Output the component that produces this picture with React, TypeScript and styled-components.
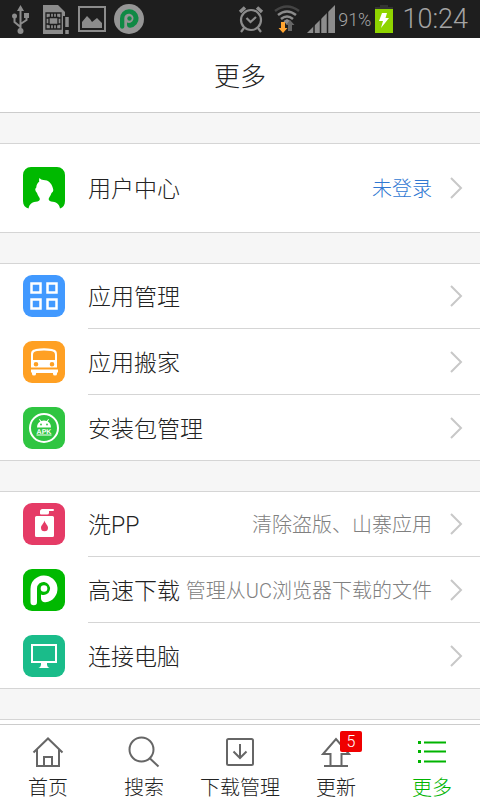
import React from "react";
import styled, { createGlobalStyle } from "styled-components";

const GlobalStyle = createGlobalStyle`
  * { box-sizing: border-box; }
  body {
    margin: 0;
    background: #f6f6f6;
    color: #222;
    font-family: Roboto, "Noto Sans CJK SC", sans-serif;
    font-weight: 300;
  }
  button { font: inherit; color: inherit; }
  svg { display: block; flex: none; }
`;

const Page = styled.div`
  display: flex;
  flex-direction: column;
  height: 100vh;
`;

const StatusBar = styled.div`
  display: flex;
  flex: none;
  align-items: center;
  justify-content: space-between;
  height: 38px;
  padding: 0 12px 0 10px;
  background: #1e1e1e;
  color: #a4a4a4;
`;

const StatusSide = styled.div<{ $gap: number }>`
  display: flex;
  align-items: center;
  gap: ${(p) => p.$gap}px;
`;

const Battery = styled.span`
  font-size: 18px;
  line-height: 24px;
  padding-top: 2px;
  margin: 0 -2px 0 -3px;
`;

const Clock = styled.time`
  font-size: 27px;
  line-height: 38px;
  margin-left: 3px;
`;

const Header = styled.header`
  display: flex;
  flex: none;
  align-items: center;
  justify-content: center;
  height: 75px;
  padding-top: 4px;
  background: #fff;
  border-bottom: 1px solid #ccc;
`;

const Title = styled.h1`
  margin: 0;
  font-size: 26px;
  line-height: 40px;
  font-weight: 300;
`;

const Content = styled.main`
  flex: 1;
  min-height: 0;
  overflow: hidden;
  padding-top: 30px;
`;

const Group = styled.ul`
  list-style: none;
  margin: 0 0 30px;
  padding: 0;
  min-height: 66px;
  background: #fff;
  border-top: 1px solid #d5d5d5;
  border-bottom: 1px solid #d5d5d5;
`;

const Row = styled.button<{ $tall?: boolean }>`
  display: flex;
  align-items: stretch;
  width: 100%;
  min-height: ${(p) => (p.$tall ? 88 : 64)}px;
  padding: 0;
  border: 0;
  background: transparent;
  text-align: left;
  cursor: pointer;
`;

const IconCell = styled.span`
  display: flex;
  flex: none;
  align-items: center;
  justify-content: center;
  width: 88px;
`;

const RowBody = styled.span`
  display: flex;
  flex: 1;
  align-items: center;
  min-width: 0;
  padding-right: 17px;
`;

const Item = styled.li`
  & + & ${Row} { min-height: 66px; }
  & + & ${IconCell} { padding-top: 2px; }
  & + & ${RowBody} { border-top: 1px solid #d5d5d5; }
`;

const Label = styled.span`
  padding-top: 4px;
  font-size: 23px;
  line-height: 32px;
  white-space: nowrap;
`;

const Detail = styled.span<{ $link?: boolean }>`
  flex: 1;
  margin-right: 17px;
  padding-top: 2px;
  text-align: right;
  white-space: nowrap;
  font-size: 20px;
  line-height: 32px;
  color: ${(p) => (p.$link ? "#2f78d2" : "#808080")};
`;

const TabBar = styled.nav`
  display: grid;
  grid-template-columns: repeat(5, 1fr);
  flex: none;
  height: 76px;
  background: #fff;
  border-top: 1px solid #ccc;
`;

const Tab = styled.button<{ $active?: boolean }>`
  display: flex;
  flex-direction: column;
  align-items: center;
  padding: 10px 0 0;
  border: 0;
  background: transparent;
  white-space: nowrap;
  font-size: 20px;
  line-height: 28px;
  color: ${(p) => (p.$active ? "#00b400" : "#222")};
  cursor: pointer;
`;

const TabIcon = styled.span`
  position: relative;
  margin-bottom: 3px;
`;

const Badge = styled.span`
  position: absolute;
  top: -4px;
  left: 21px;
  width: 22px;
  border-radius: 2px;
  background: #f00000;
  color: #fff;
  font-size: 16px;
  line-height: 21px;
  text-align: center;
`;

const Tile = ({ color, children }: { color: string; children: React.ReactNode }) => (
  <svg width="42" height="42" viewBox="0 0 42 42" aria-hidden="true">
    <rect width="42" height="42" rx="9" fill={color} />
    {children}
  </svg>
);

const Chevron = () => (
  <svg width="14" height="22" viewBox="0 0 14 22" fill="none" stroke="#c8c8c8" strokeWidth="2" aria-hidden="true">
    <path d="M2 1 12 11 2 21" />
  </svg>
);

const tiles: Record<string, React.ReactNode> = {
  user: (
    <svg width="42" height="42" viewBox="0 0 42 42" aria-hidden="true">
      <path
        fill="#00b900"
        d="M8 0h26a8 8 0 0 1 8 8v26c0 4-2 6.500-5 7.500-1-5-4-6.500-9-7-2.500-.5-3-2.500-1.500-4.500 1-1.500 1.500-2.500 2-4 2-1 2-3 1.500-4.500C28.500 16 25.500 13 20.500 13c-1.800 0-3-.7-4-2-.6 1.500-.4 2.500-.2 3.500-2 1.500-3 3.500-3 6-1.500 1-1.500 3 .7 5.500.5 1.500 1 2.500 2 4 1.500 2 1 4-1.500 4.500-5 .5-8 2-9 7C2 40.500 0 38 0 34V8a8 8 0 0 1 8-8z"
      />
    </svg>
  ),
  apps: (
    <Tile color="#4199ff">
      <g fill="none" stroke="#fff" strokeWidth="2.500">
        <rect x="8.500" y="8.500" width="9" height="9" />
        <rect x="24.500" y="8.500" width="9" height="9" />
        <rect x="8.500" y="24.500" width="9" height="9" />
        <rect x="24.500" y="24.500" width="9" height="9" />
      </g>
    </Tile>
  ),
  bus: (
    <Tile color="#ffa023">
      <path fill="#fff" fillRule="evenodd" d="M8 26.500V14c0-4 1-5 5-6 5-1 11-1 16 0 4 1 5 2 5 6v12.500zM10 19h22v-5c0-2.500-1-3.500-4-4-5-.8-9-.8-14 0-3 .5-4 1.500-4 4zM13 21a2.300 2.300 0 1 0 0 4.600 2.300 2.300 0 0 0 0-4.600zM29 21a2.300 2.300 0 1 0 0 4.600 2.300 2.300 0 0 0 0-4.600z" />
      <path fill="#fff" d="M8 28.500h27v2.500l-1 1v1q0 1.500-2 1.500T30 33v-1H13v1q0 1.500-2 1.500T9 33v-1l-1-1z" />
    </Tile>
  ),
  apk: (
    <Tile color="#2fc541">
      <circle cx="21" cy="21" r="14" fill="none" stroke="#fff" strokeWidth="2" />
      <path fill="#fff" d="M14 20.500c0-3 1.300-5 3.300-6L16 12.300l.7-.4 1.500 2.100a9 9 0 0 1 5.600 0l1.500-2.100.7.4-1.300 2.200c2 1 3.300 3 3.300 6z" />
      <circle cx="18" cy="17.500" r=".9" fill="#2fc541" />
      <circle cx="24" cy="17.500" r=".9" fill="#2fc541" />
      <text x="21" y="26.500" textAnchor="middle" fill="#fff" fontFamily="Liberation Sans, sans-serif" fontWeight="700" fontSize="7" textRendering="geometricPrecision">APK</text>
      <path stroke="#fff" d="M13.500 28h15" />
    </Tile>
  ),
  wash: (
    <Tile color="#e53b66">
      <path fill="#fff" d="M17 8q0-1 1-1.500l1-.5h11q1 0 1 1t-1 1h-4v2q0 1.500-2 1.500h-6q-1 0-1-1zM13.500 13h16q1.500 0 1.500 1.500v18q0 1.500-1.500 1.500h-16q-1.500 0-1.500-1.500v-18q0-1.500 1.500-1.500z" />
      <path fill="#e53b66" d="M21.500 17.500c.8 3.500 3.500 4.500 3.500 7.200a3.500 3.500 0 0 1-7 0c0-2.700 2.700-3.700 3.500-7.200z" />
    </Tile>
  ),
  pp: (
    <Tile color="#00b900">
      <path fill="#fff" d="M7.500 33V20a13.500 13.500 0 1 1 15 13.300c-2 .3-4.500-.8-4.500-4V25.500a6.500 6.500 0 1 0-4-6V33a3.200 3.200 0 0 1-6.500 0z" />
      <circle cx="21" cy="19.500" r="3.300" fill="#fff" />
    </Tile>
  ),
  computer: (
    <Tile color="#1abc8a">
      <rect x="9" y="10" width="24" height="17" fill="none" stroke="#fff" strokeWidth="2" />
      <path fill="#fff" d="M8 26h26v2H8zM18 28h6v2q.5 2.500 2.500 3H15.500Q17.500 32.500 18 30z" />
    </Tile>
  ),
};

interface Entry {
  icon: string;
  label: string;
  detail?: string;
  link?: boolean;
  tall?: boolean;
}

const groups: Entry[][] = [
  [{ icon: "user", label: "用户中心", detail: "未登录", link: true, tall: true }],
  [
    { icon: "apps", label: "应用管理" },
    { icon: "bus", label: "应用搬家" },
    { icon: "apk", label: "安装包管理" },
  ],
  [
    { icon: "wash", label: "洗PP", detail: "清除盗版、山寨应用" },
    { icon: "pp", label: "高速下载", detail: "管理从UC浏览器下载的文件" },
    { icon: "computer", label: "连接电脑" },
  ],
  [],
];

const tabs = [
  {
    label: "首页",
    icon: <path d="M2.500 17.500 17 3.500l14.500 14M6 14.500V31h22V14.500M13 31v-9h8v9" />,
  },
  {
    label: "搜索",
    icon: (
      <>
        <circle cx="14.500" cy="14.500" r="12" />
        <path d="m22.500 23 9 8.500" />
      </>
    ),
  },
  {
    label: "下载管理",
    icon: (
      <>
        <rect x="4" y="4" width="26" height="26" rx="1.500" />
        <path d="M17 9v14M10.500 16.500l6.500 6.500 6.500-6.500" />
      </>
    ),
  },
  {
    label: "更新",
    badge: "5",
    icon: <path d="M11.500 31V19H4L17 4l13 15h-7.500v12M5 31h24" />,
  },
  {
    label: "更多",
    active: true,
    icon: (
      <g stroke="#00b400">
        <path strokeWidth="3" d="M3 7.500h3M3 16.500h3M3 26.500h3" />
        <path d="M9 7.500h22M9 16.500h22M9 26.500h22" />
      </g>
    ),
  },
];

const StatusIcons = () => (
  <StatusSide $gap={8}>
    <svg width="22" height="32" viewBox="0 0 22 32" fill="none" stroke="#8c8c8c" strokeWidth="2" aria-hidden="true">
      <path d="M10.500 28V6M10.500 24 4.500 19v-6M10.500 21l6-4v-4" />
      <path fill="#8c8c8c" stroke="none" d="M10.500 2 14 8H7zM14 10h5v5h-5z" />
      <circle cx="4.500" cy="13" r="2.500" fill="#8c8c8c" stroke="none" />
      <circle cx="10.500" cy="28" r="3" fill="#8c8c8c" stroke="none" />
    </svg>
    <svg width="30" height="32" viewBox="0 0 30 32" aria-hidden="true">
      <path fill="#8c8c8c" d="M3 2h15l7 7v22H3z" />
      <g fill="none" stroke="#1e1e1e" strokeWidth="1.300">
        <path d="M6 10h15v16H6zM10.500 10v5M16.500 10v5M10.500 21v5M16.500 21v5M13.500 10v5M13.500 21v5M6 15h15M6 21h15" />
        <path fill="#8c8c8c" d="M9 14.500h9v7H9z" />
      </g>
      <path stroke="#1e1e1e" strokeWidth="6" d="M26 13v19" />
      <path stroke="#8c8c8c" strokeWidth="3.500" d="M27 14v10M27 27v4" />
    </svg>
    <svg width="28" height="28" viewBox="0 0 28 28" aria-hidden="true">
      <rect x="1" y="2" width="26" height="24" fill="none" stroke="#8c8c8c" strokeWidth="2" />
      <path fill="#8c8c8c" d="M4 23v-6l5-6 3 3 2 3 5-4 5 5v5z" />
    </svg>
    <svg width="30" height="30" viewBox="0 0 30 30" aria-hidden="true">
      <circle cx="15" cy="15" r="15" fill="#969696" />
      <path fill="#108945" d="M6 23V14.500a9.300 9.300 0 1 1 10.500 9.200c-2 .2-3.500-.7-3.500-3V18.500a4.600 4.600 0 1 0-2.700-4.200V23a2.200 2.200 0 0 1-4.300 0z" />
      <circle cx="15.500" cy="14.500" r="2.200" fill="#108945" />
    </svg>
  </StatusSide>
);

const DeviceIcons = () => (
  <>
    <StatusSide $gap={9}>
      <svg width="26" height="28" viewBox="0 0 26 28" fill="none" stroke="#8c8c8c" strokeWidth="2.200" aria-hidden="true">
        <circle cx="13" cy="15" r="10" />
        <path d="m8.500 13 4 4 5.500-5M6 23l-3 4M20 23l3 4" />
        <path strokeWidth="3.500" d="m2 7 5-4.500M24 7l-5-4.500" />
      </svg>
      <svg width="28" height="30" viewBox="0 0 28 30" fill="none" aria-hidden="true">
        <path stroke="#444" strokeWidth="2.500" d="M2 7q12-9 24 0" />
        <path stroke="#8c8c8c" strokeWidth="2.500" d="M5 11q9-7 18 0M8 15q6-5 12 0" />
        <path fill="#8c8c8c" d="m10.500 17 3.500-2 3.500 2-3.500 4z" />
        <path fill="#ffa430" d="M8 18h4v6h2.500L10 29l-4.500-5H8z" />
        <path fill="#666" d="M15 27v-6h-2l4-5 4.500 5H19v6z" />
      </svg>
    </StatusSide>
    <svg width="28" height="28" viewBox="0 0 28 28" aria-hidden="true">
      <path fill="#8c8c8c" d="M0 28 28 0v28z" />
      <path stroke="#1e1e1e" strokeWidth="1.500" d="M7 28V18M13.500 28V12M20.500 28V5" />
    </svg>
  </>
);

const Charging = () => (
  <svg width="18" height="28" viewBox="0 0 18 28" aria-hidden="true">
    <path fill="#333" d="M5 0h8v2h5v3H0V2h5z" />
    <path fill="#8fd400" d="M0 4h18v24H0z" />
    <path fill="#fff" d="M7 8h5l-1.500 5H14L6 23l2-7H4z" />
  </svg>
);

export default function App() {
  return (
    <Page>
      <GlobalStyle />
      <StatusBar>
        <StatusIcons />
        <StatusSide $gap={6}>
          <DeviceIcons />
          <Battery>91%</Battery>
          <Charging />
          <Clock>10:24</Clock>
        </StatusSide>
      </StatusBar>
      <Header>
        <Title>更多</Title>
      </Header>
      <Content>
        {groups.map((entries, i) => (
          <Group key={i}>
            {entries.map((entry) => (
              <Item key={entry.label}>
                <Row type="button" $tall={entry.tall}>
                  <IconCell>{tiles[entry.icon]}</IconCell>
                  <RowBody>
                    <Label>{entry.label}</Label>
                    <Detail $link={entry.link}>{entry.detail}</Detail>
                    <Chevron />
                  </RowBody>
                </Row>
              </Item>
            ))}
          </Group>
        ))}
      </Content>
      <TabBar>
        {tabs.map((tab) => (
          <Tab key={tab.label} type="button" $active={tab.active}>
            <TabIcon>
              <svg width="34" height="36" viewBox="0 0 34 36" fill="none" stroke="#666" strokeWidth="2" aria-hidden="true">
                {tab.icon}
              </svg>
              {tab.badge && <Badge>{tab.badge}</Badge>}
            </TabIcon>
            {tab.label}
          </Tab>
        ))}
      </TabBar>
    </Page>
  );
}
